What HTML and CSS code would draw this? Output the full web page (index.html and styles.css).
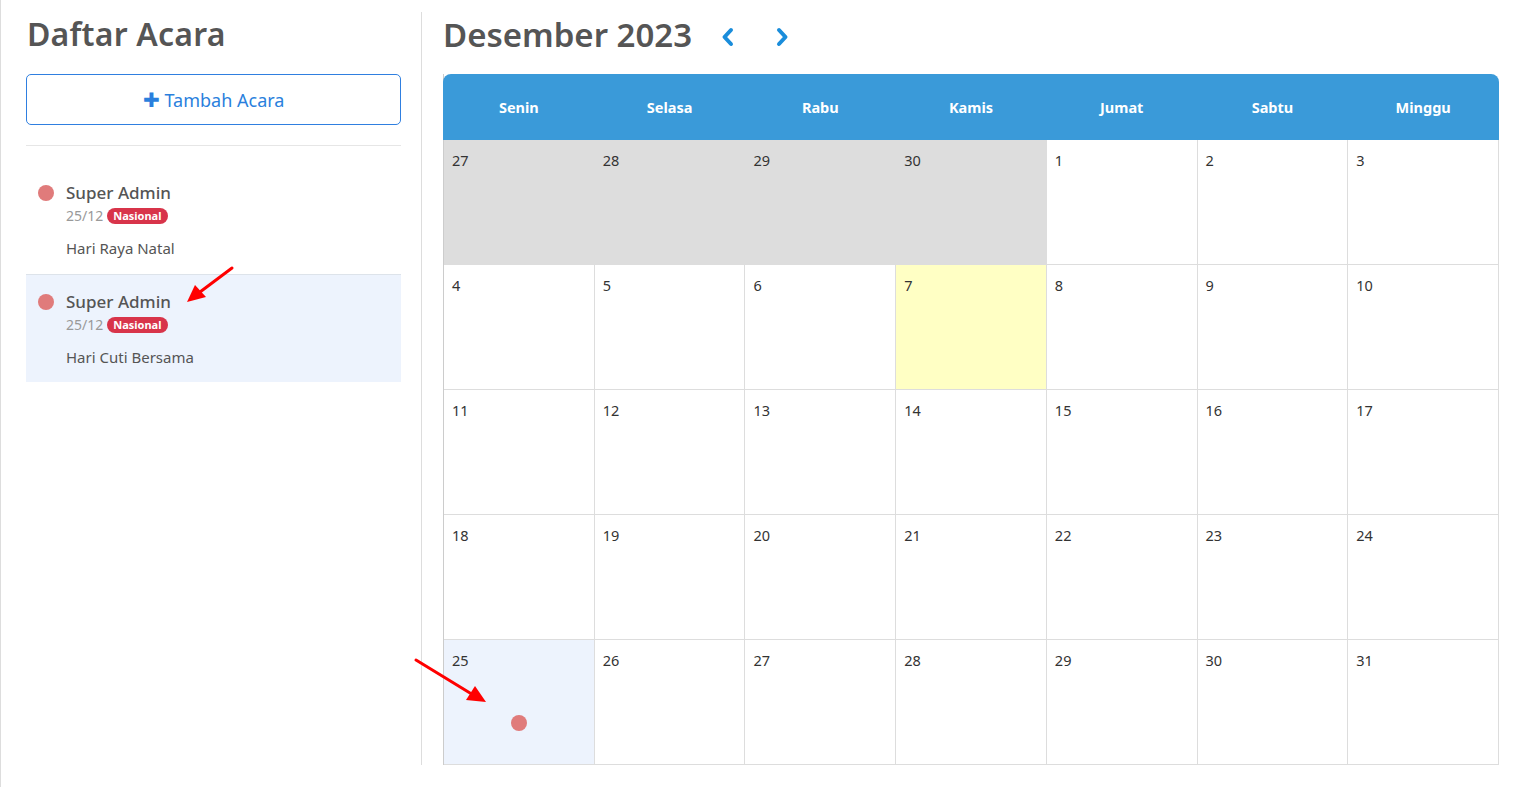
FILE: index.html
```html
<!DOCTYPE html>
<html lang="id">
<head>
<meta charset="UTF-8">
<meta name="viewport" content="width=device-width, initial-scale=1.0">
<title>Kalender Acara</title>
<link rel="stylesheet" href="styles.css">
</head>
<body>
<div class="page">
  <aside class="sidebar">
    <h1 class="title">Daftar Acara</h1>
    <button class="add-btn"><span class="plus">&#x271A;</span>Tambah Acara</button>
    <div class="events">
      <div class="event">
        <span class="dot"></span>
        <div class="event-body">
          <div class="event-user">Super Admin</div>
          <div class="event-meta">25/12 <span class="badge">Nasional</span></div>
          <div class="event-name">Hari Raya Natal</div>
        </div>
      </div>
      <div class="event active">
        <span class="dot"></span>
        <div class="event-body">
          <div class="event-user">Super Admin</div>
          <div class="event-meta">25/12 <span class="badge">Nasional</span></div>
          <div class="event-name">Hari Cuti Bersama</div>
        </div>
      </div>
    </div>
  </aside>
  <main class="calendar">
    <div class="cal-head">
      <h2 class="month">Desember 2023</h2>
      <button class="nav"><svg width="16" height="22" viewBox="0 0 16 22"><path d="M11 4 L4.5 11 L11 18" fill="none" stroke="#1a8ddb" stroke-width="4" stroke-linecap="round" stroke-linejoin="round"/></svg></button>
      <button class="nav"><svg width="16" height="22" viewBox="0 0 16 22"><path d="M5 4 L11.5 11 L5 18" fill="none" stroke="#1a8ddb" stroke-width="4" stroke-linecap="round" stroke-linejoin="round"/></svg></button>
    </div>
    <div class="grid">
      <div class="dow">Senin</div><div class="dow">Selasa</div><div class="dow">Rabu</div><div class="dow">Kamis</div><div class="dow">Jumat</div><div class="dow">Sabtu</div><div class="dow">Minggu</div>
      <div class="day other">27</div><div class="day other">28</div><div class="day other">29</div><div class="day other">30</div><div class="day">1</div><div class="day">2</div><div class="day">3</div>
      <div class="day">4</div><div class="day">5</div><div class="day">6</div><div class="day today">7</div><div class="day">8</div><div class="day">9</div><div class="day">10</div>
      <div class="day">11</div><div class="day">12</div><div class="day">13</div><div class="day">14</div><div class="day">15</div><div class="day">16</div><div class="day">17</div>
      <div class="day">18</div><div class="day">19</div><div class="day">20</div><div class="day">21</div><div class="day">22</div><div class="day">23</div><div class="day">24</div>
      <div class="day selected">25<span class="cal-dot"></span></div><div class="day">26</div><div class="day">27</div><div class="day">28</div><div class="day">29</div><div class="day">30</div><div class="day">31</div>
    </div>
  </main>
  <svg class="marks" width="1522" height="787" viewBox="0 0 1522 787">
    <line x1="232" y1="268" x2="200" y2="292" stroke="#f00" stroke-width="3" stroke-linecap="round"/>
    <polygon points="187,302 195,285 206,297" fill="#f00"/>
    <line x1="416" y1="660" x2="470" y2="693" stroke="#f00" stroke-width="3" stroke-linecap="round"/>
    <polygon points="486,702 466,700 475,686" fill="#f00"/>
  </svg>
</div>
</body>
</html>
```
FILE: styles.css
```css
*{margin:0;padding:0;box-sizing:border-box;}
body{font-family:"Noto Sans","Open Sans",sans-serif;color:#555;background:#fff;}
.page{position:relative;display:flex;height:787px;border-left:1px solid #ddd;padding-top:12px;}
.sidebar{width:421px;height:753px;padding:0 20px 0 25px;border-right:1px solid #ddd;}
.title{font-size:32px;font-weight:600;color:#555;line-height:44px;margin:0 0 18px 1px;letter-spacing:.2px;}
.add-btn{display:flex;align-items:center;justify-content:center;width:100%;height:51px;background:#fff;border:1px solid #2f7fe0;border-radius:5px;color:#2a7fdd;font-family:inherit;font-size:18px;cursor:pointer;}
.plus{font-size:20px;margin-right:5px;line-height:1;}
.events{margin-top:20px;border-top:1px solid #e6e6e6;}
.event{display:flex;padding:16px 0 16px 12px;border-bottom:1px solid #dde3ea;height:129px;}
.event.active{background:#edf3fd;border-bottom:none;height:107px;}
.event:first-child{padding-top:36px;}
.dot{width:16px;height:16px;border-radius:50%;background:#e07b7b;margin-top:3px;flex-shrink:0;}
.event-body{margin-left:12px;}
.event-user{font-size:17px;font-weight:500;color:#555;line-height:22px;}
.event-meta{font-size:14px;color:#999;line-height:18px;display:flex;align-items:center;gap:4px;margin-top:3px;}
.badge{background:#d8344a;color:#fff;font-size:11px;font-weight:700;border-radius:9px;padding:1px 6px;line-height:14px;}
.event-name{font-size:15px;color:#555;margin-top:13px;}
.calendar{flex:1;padding:0 23px 0 21px;}
.cal-head{display:flex;align-items:center;height:46px;margin-bottom:16px;}
.month{font-size:33px;font-weight:600;color:#555;line-height:46px;margin-right:23px;}
.nav{background:none;border:none;width:26px;display:flex;justify-content:center;margin-right:28px;cursor:pointer;padding-top:4px;}
.grid{display:grid;grid-template-columns:repeat(7,1fr);grid-template-rows:66px repeat(5,125px);border-left:1px solid #ccc;}
.dow{background:#3a9ad9;color:#fff;font-weight:700;font-size:14.5px;display:flex;align-items:center;justify-content:center;margin-left:-1px;}
.dow:first-child{border-top-left-radius:8px;}
.dow:nth-child(7){border-top-right-radius:8px;}
.day{position:relative;border-right:1px solid #ddd;border-bottom:1px solid #ddd;padding:10px 0 0 8px;font-size:14.5px;color:#333;}
.day.other{background:#ddd;border-color:#ddd;}
.day.today{background:#ffffc4;}
.day.selected{background:#edf3fd;}
.cal-dot{position:absolute;left:67px;top:75px;width:16px;height:16px;border-radius:50%;background:#e07b7b;}
.marks{position:absolute;left:-1px;top:0;pointer-events:none;}
```
